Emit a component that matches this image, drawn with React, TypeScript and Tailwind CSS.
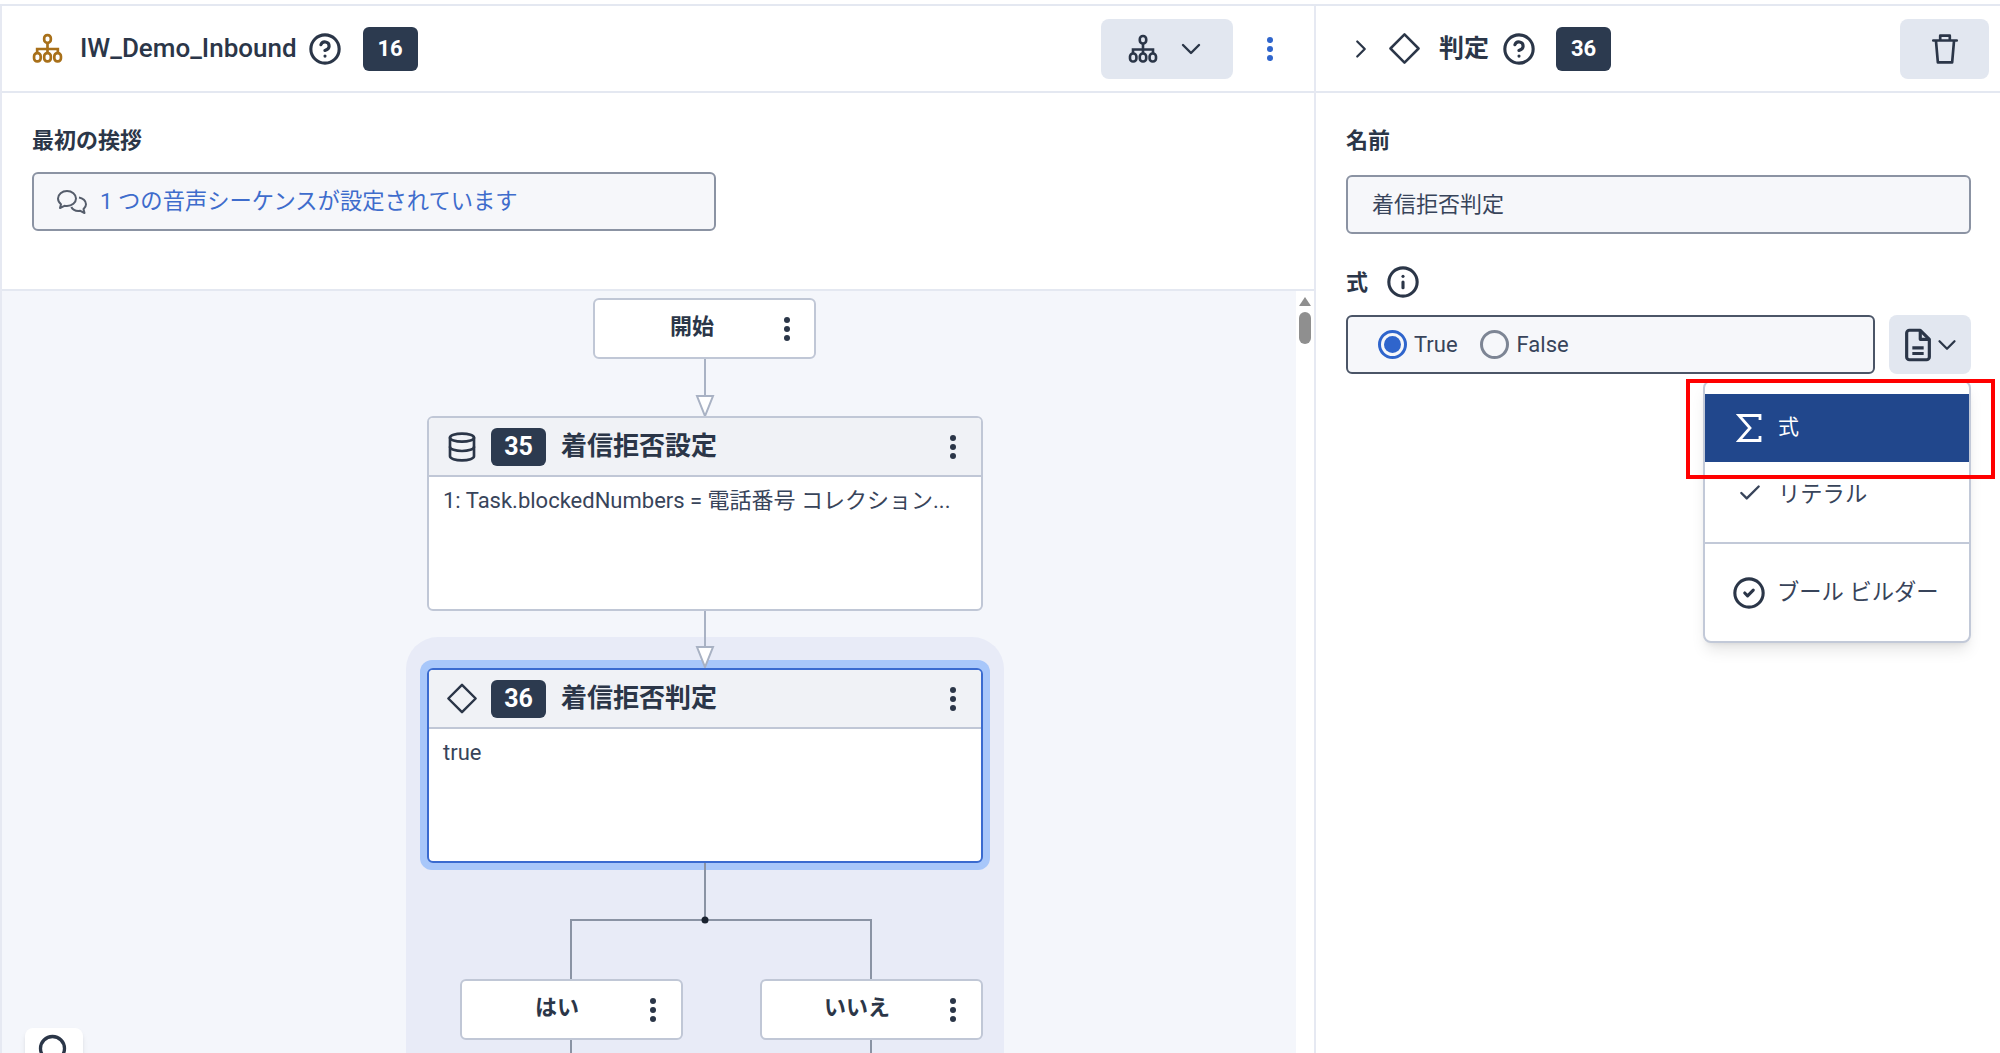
import React from "react";
import { ChevronDown, ChevronRight, CircleHelp, Info, Database, Check, CircleCheck, Search } from "lucide-react";

const FONT = "font-['Roboto','Noto_Sans_CJK_JP',sans-serif]";

function OrgIcon({ className }: { className?: string }) {
  return (
    <svg viewBox="0 0 30 30" fill="none" stroke="currentColor" strokeWidth="2.6" className={className}>
      <rect x="11.8" y="2" width="6.4" height="7.5" rx="3" />
      <path d="M15 9.5V19M5 19v-3.5h20V19" />
      <rect x="2" y="19.5" width="6.4" height="8" rx="3" />
      <rect x="11.8" y="19.5" width="6.4" height="8" rx="3" />
      <rect x="21.6" y="19.5" width="6.4" height="8" rx="3" />
    </svg>
  );
}

function DiamondIcon({ className }: { className?: string }) {
  return (
    <svg viewBox="0 0 34 34" fill="none" stroke="currentColor" strokeWidth="2.6" strokeLinejoin="round" className={className}>
      <path d="M17 2.5 31.5 17 17 31.5 2.5 17Z" />
    </svg>
  );
}

function ChatIcon({ className }: { className?: string }) {
  return (
    <svg viewBox="0 0 32 26" fill="none" stroke="currentColor" strokeWidth="2" strokeLinejoin="round" className={className}>
      <path d="M11 2C6 2 2 5.400 2 9.500c0 2.300 1.200 4.300 3 5.700L4 19l4.500-2.200c.8.200 1.600.2 2.500.2 5 0 9-3.400 9-7.500S16 2 11 2Z" />
      <path d="M23 8.500c3.800.6 7 3.400 7 6.800 0 1.900-1 3.600-2.500 4.800l1 3.900-4.200-2.200c-3.600.5-7.500-.9-9-3.800" />
    </svg>
  );
}

function TrashIcon({ className }: { className?: string }) {
  return (
    <svg viewBox="0 0 30 30" fill="none" stroke="currentColor" strokeWidth="2.500" strokeLinecap="round" strokeLinejoin="round" className={className}>
      <path d="M4 7h22M10.500 7V2.500h9V7M6.500 7l1.800 20.500h13.400L23.500 7" />
    </svg>
  );
}

function DocIcon({ className }: { className?: string }) {
  return (
    <svg viewBox="0 0 24 30" fill="none" stroke="currentColor" strokeWidth="2.800" strokeLinejoin="round" className={className}>
      <path d="M4.500 2h9.500l8 8v15.500a2.500 2.500 0 0 1-2.500 2.500h-15A2.500 2.500 0 0 1 2 25.500v-21A2.500 2.500 0 0 1 4.500 2Z" />
      <path d="M14 2v8h8M7 17.500h10M7 22.500h10" />
    </svg>
  );
}

function SigmaIcon({ className }: { className?: string }) {
  return (
    <svg viewBox="0 0 26 30" fill="none" stroke="currentColor" strokeWidth="2.800" className={className}>
      <path d="M24 7V2.500H3l11 12.500L3 27.500h21V23" />
    </svg>
  );
}

function Badge({ n }: { n: number }) {
  return (
    <span className="flex items-center justify-center rounded-md bg-[#2c3a4f] w-[55px] h-[38px] text-[25px] font-bold text-white shrink-0">
      {n}
    </span>
  );
}

function HeaderBadge({ n }: { n: number }) {
  return (
    <span className="flex items-center justify-center rounded-md bg-[#2c3a4f] w-[55px] h-[44px] text-[22px] font-bold text-white shrink-0">
      {n}
    </span>
  );
}

function Dots({ className = "bg-[#2b3648]" }: { className?: string }) {
  return (
    <span className="flex flex-col gap-[3px] items-center w-[6px] shrink-0">
      <i className={`block w-[6px] h-[6px] rounded-full ${className}`} />
      <i className={`block w-[6px] h-[6px] rounded-full ${className}`} />
      <i className={`block w-[6px] h-[6px] rounded-full ${className}`} />
    </span>
  );
}

function SmallNode({ label, className, labelOffset, dotsRight = "mr-[25px]" }: { label: string; className: string; labelOffset: string; dotsRight?: string }) {
  return (
    <div className={`absolute w-[223px] h-[61px] flex items-center bg-white border-2 border-[#c0c7d6] rounded-md text-[22px] font-bold text-[#2b3648] ${className}`}>
      <span className={`flex-1 text-center pb-[4px] ${labelOffset}`}>{label}</span>
      <span className={dotsRight}><Dots /></span>
    </div>
  );
}

function StepNode({ n, title, body, icon, selected, className }: { n: number; title: string; body: string; icon: React.ReactNode; selected?: boolean; className: string }) {
  return (
    <div
      className={`absolute w-[556px] h-[195px] flex flex-col bg-white rounded-md border-2 overflow-hidden ${
        selected ? "border-[#3a6bd0]" : "border-[#c0c7d6]"
      } ${className}`}
    >
      <div className="flex items-center h-[59px] shrink-0 bg-[#f0f2f6] border-b-2 border-[#c0c7d6] pl-[17px] pr-[25px]">
        <span className="w-[32px] flex justify-center text-[#2b3648]">{icon}</span>
        <span className="ml-[13px]"><Badge n={n} /></span>
        <span className="ml-[15px] flex-1 text-[26px] font-bold text-[#2b3648]">{title}</span>
        <Dots />
      </div>
      <div className="px-[14px] pt-[8px] text-[22px] leading-[32px] text-[#38445a] whitespace-nowrap overflow-hidden">{body}</div>
    </div>
  );
}

function Connectors() {
  return (
    <svg className="absolute left-0 top-0 w-[1295px] h-[762px]" viewBox="0 0 1295 762" fill="none">
      <g stroke="#a9b2c4" strokeWidth="2">
        <path d="M703 67V106" />
        <path d="M695 105 L711 105 L703 125Z" fill="#fff" />
        <path d="M703 320V357" />
        <path d="M695 356 L711 356 L703 376Z" fill="#fff" />
      </g>
      <g stroke="#8a93a4" strokeWidth="2">
        <path d="M703 572V629M569 689V629H869V689M569 749V762M869 749V762" />
      </g>
      <circle cx="703" cy="629" r="3.500" fill="#1a2230" />
    </svg>
  );
}

export default function App() {
  return (
    <div className={`${FONT} w-[2000px] h-[1053px] overflow-hidden bg-white pt-[4px] text-[#2b3648]`}>
      <div className="flex h-full border-t-2 border-[#e4e8f1]">
        {/* flow panel */}
        <div className="w-[1316px] shrink-0 flex flex-col border-l-2 border-r-2 border-[#e6e9f2]">
          <div className="h-[87px] shrink-0 flex items-center pl-[30px] pr-[41px] border-b-2 border-[#e4e8f1]">
            <OrgIcon className="w-[31px] h-[31px] text-[#a8701a]" />
            <span className="ml-[17px] text-[26px] font-medium">IW_Demo_Inbound</span>
            <CircleHelp className="ml-[11px] w-[34px] h-[34px]" strokeWidth={2.2} />
            <span className="ml-[21px]"><HeaderBadge n={16} /></span>
            <div className="ml-auto flex items-center gap-[34px]">
              <button className="w-[132px] h-[60px] flex items-center justify-center gap-[17px] rounded-lg bg-[#e2e7f0]">
                <OrgIcon className="w-[30px] h-[30px]" />
                <ChevronDown className="w-[32px] h-[32px]" strokeWidth={1.8} />
              </button>
              <Dots className="bg-[#2f65cc]" />
            </div>
          </div>
          <div className="h-[198px] shrink-0 px-[30px] pt-[33px] border-b-2 border-[#e4e8f1]">
            <div className="text-[22px] leading-[30px] font-bold">最初の挨拶</div>
            <div className="mt-[16px] w-[684px] h-[59px] flex items-center pl-[22px] bg-[#f6f7fa] border-2 border-[#8b93a3] rounded-md">
              <ChatIcon className="w-[32px] h-[26px] text-[#555d6b]" />
              <span className="ml-[12px] text-[22.300px] text-[#3e6ccc]">1 つの音声シーケンスが設定されています</span>
            </div>
          </div>
          <div className="relative flex-1 bg-[#f4f6fb] overflow-hidden">
            <div className="absolute left-[404px] top-[346px] w-[598px] h-[500px] bg-[#e8ebf7] rounded-[32px]" />
            <div className="absolute left-[418px] top-[369px] w-[570px] h-[210px] rounded-xl bg-[#a8c7fa]" />
            <Connectors />
            <SmallNode label="開始" className="left-[591px] top-[7px]" labelOffset="pl-[5px]" dotsRight="mr-[24px]" />
            <StepNode
              className="left-[425px] top-[125px]"
              n={35}
              title="着信拒否設定"
              body="1: Task.blockedNumbers = 電話番号 コレクション..."
              icon={<Database className="w-[32px] h-[32px]" strokeWidth={2} />}
            />
            <StepNode
              className="left-[425px] top-[377px]"
              n={36}
              title="着信拒否判定"
              body="true"
              selected
              icon={<DiamondIcon className="w-[33px] h-[33px]" />}
            />
            <SmallNode label="はい" className="left-[458px] top-[688px]" labelOffset="pl-[2px]" />
            <SmallNode label="いいえ" className="left-[758px] top-[688px]" labelOffset="pl-[2px]" />
            {/* zoom control cut off by the window */}
            <div className="absolute left-[23px] top-[737px] w-[58px] h-[60px] bg-white rounded-lg shadow-md flex justify-center pt-[4px]">
              <Search className="w-[36px] h-[36px]" strokeWidth={2.200} />
            </div>
            {/* scrollbar */}
            <div className="absolute right-0 top-0 bottom-0 w-[18px] bg-white flex flex-col items-center pt-[6px]">
              <span className="w-0 h-0 border-x-[6px] border-x-transparent border-b-[9px] border-b-[#8f8f8f]" />
              <span className="mt-[6px] w-[12px] h-[32px] rounded-full bg-[#8f8f8f]" />
            </div>
          </div>
        </div>

        {/* properties panel */}
        <div className="relative flex-1 flex flex-col">
          <div className="h-[87px] shrink-0 flex items-center pl-[30px] pr-[11px] border-b-2 border-[#e4e8f1]">
            <ChevronRight className="w-[30px] h-[30px]" strokeWidth={1.8} />
            <DiamondIcon className="ml-[12px] w-[33px] h-[33px]" />
            <span className="ml-[18px] text-[25px] font-bold">判定</span>
            <CircleHelp className="ml-[13px] w-[34px] h-[34px]" strokeWidth={2.2} />
            <span className="ml-[20px]"><HeaderBadge n={36} /></span>
            <button className="ml-auto w-[89px] h-[60px] flex items-center justify-center rounded-lg bg-[#e2e7f0]">
              <TrashIcon className="w-[32px] h-[32px]" />
            </button>
          </div>
          <div className="pl-[30px] pr-[29px] pt-[33px]">
            <div className="text-[22px] leading-[30px] font-bold">名前</div>
            <div className="mt-[19px] h-[59px] flex items-center pl-[24px] bg-[#f6f7fa] border-2 border-[#8b93a3] rounded-md text-[22px] text-[#38445a]">
              着信拒否判定
            </div>
            <div className="mt-[32px] h-[32px] flex items-center gap-[18px]">
              <span className="text-[22px] font-bold">式</span>
              <Info className="w-[34px] h-[34px]" strokeWidth={2.2} />
            </div>
            <div className="mt-[17px] flex gap-[14px]">
              <div className="flex-1 h-[59px] flex items-center pl-[30px] bg-[#f6f7fa] border-2 border-[#4b5567] rounded-md text-[22px] text-[#38445a]">
                <span className="w-[29px] h-[29px] rounded-full border-[3px] border-[#2f65cc] flex items-center justify-center">
                  <i className="block w-[17px] h-[17px] rounded-full bg-[#2f65cc]" />
                </span>
                <span className="ml-[7px]">True</span>
                <span className="ml-[22px] w-[29px] h-[29px] rounded-full border-[3px] border-[#7d8594]" />
                <span className="ml-[8px]">False</span>
              </div>
              <button className="w-[82px] h-[59px] flex items-center justify-center pl-[6px] rounded-lg bg-[#e2e7f0]">
                <DocIcon className="w-[28px] h-[34px]" />
                <ChevronDown className="w-[30px] h-[30px]" strokeWidth={1.8} />
              </button>
            </div>
          </div>

          {/* dropdown menu */}
          <div className="absolute left-[387px] top-[374px] w-[268px] h-[263px] bg-white border-2 border-[#c2c9d8] rounded-lg shadow-lg text-[22.300px] text-[#38445a] flex flex-col pt-[12px]">
            <div className="h-[68px] shrink-0 flex items-center bg-[#21478c] text-white">
              <SigmaIcon className="ml-[31px] w-[26px] h-[30px]" />
              <span className="ml-[16px] text-[21px]">式</span>
            </div>
            <div className="h-[82px] shrink-0 flex items-start border-b-2 border-[#c2c9d8]">
              <Check className="ml-[32px] mt-[18px] w-[26px] h-[26px]" strokeWidth={2.2} />
              <span className="ml-[15px] mt-[16px]">リテラル</span>
            </div>
            <div className="flex-1 flex items-center">
              <CircleCheck className="ml-[27px] w-[34px] h-[34px] text-[#2b3648]" strokeWidth={2.2} />
              <span className="ml-[11px]">ブール ビルダー</span>
            </div>
          </div>
          {/* annotation */}
          <div className="absolute left-[370px] top-[373px] w-[309px] h-[100px] border-[4px] border-[#ff0000]" />
        </div>
      </div>
    </div>
  );
}
